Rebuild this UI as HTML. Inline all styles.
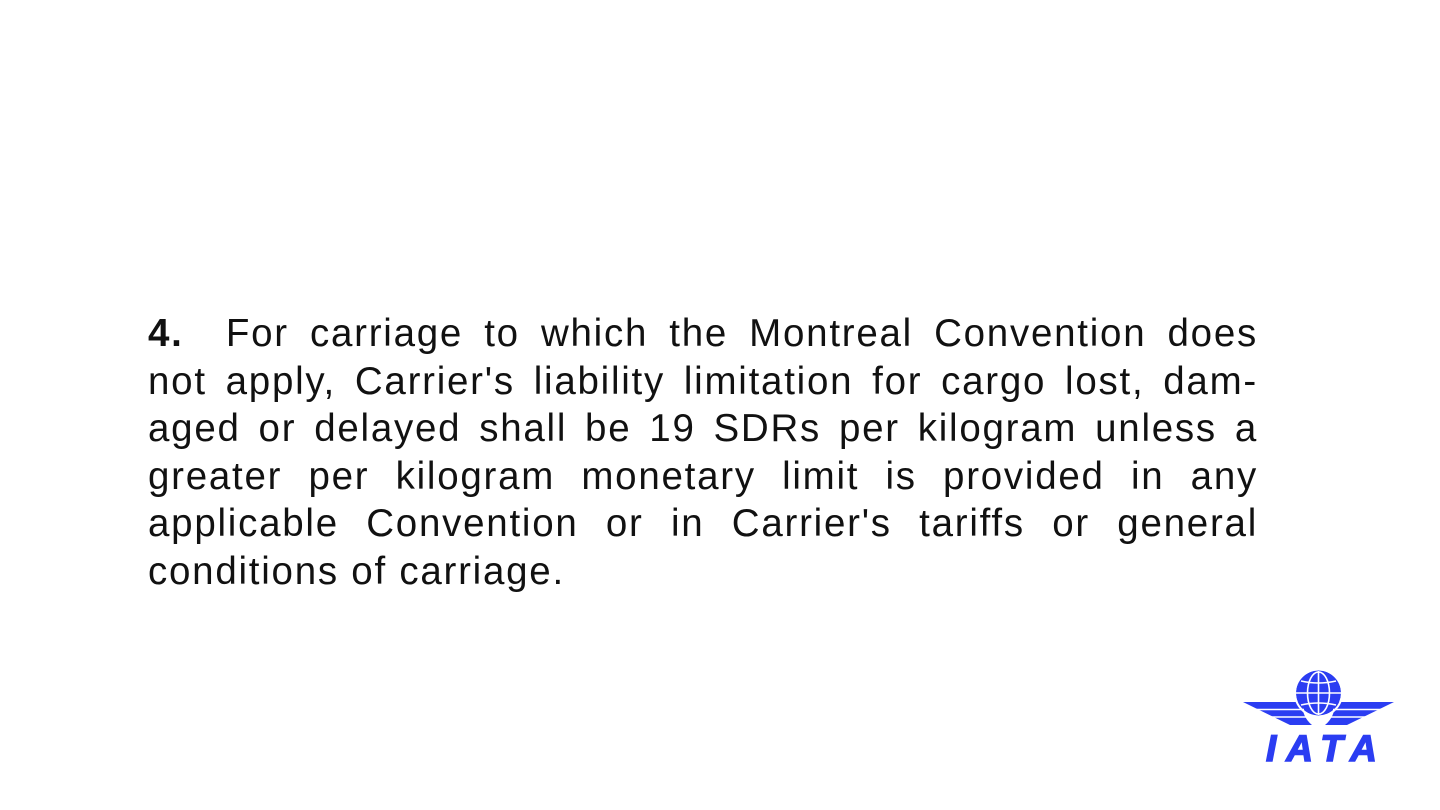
<!DOCTYPE html>
<html><head><meta charset="utf-8"><style>
html,body{margin:0;padding:0;background:#fff;width:1440px;height:810px;overflow:hidden;position:relative}
.t{position:absolute;left:148px;width:1110px;font-family:"Liberation Sans",Arial,sans-serif;font-size:38.5px;color:#111;line-height:47.5px;top:310px;letter-spacing:1.75px}
.l{display:block;text-align:justify;text-align-last:justify;height:47.5px}
.l.last{text-align-last:left;white-space:nowrap}
.iata{position:absolute;left:1266px;top:729px;font-family:"Liberation Sans",Arial,sans-serif;font-weight:bold;font-style:italic;font-size:37px;line-height:40px;color:#2b3df2;letter-spacing:10px;-webkit-text-stroke:1.5px #2b3df2}
</style></head><body>
<div class="t">
<span class="l"><b>4.</b>&nbsp; For carriage to which the Montreal Convention does</span>
<span class="l">not apply, Carrier's liability limitation for cargo lost, dam-</span>
<span class="l">aged or delayed shall be 19 SDRs per kilogram unless a</span>
<span class="l">greater per kilogram monetary limit is provided in any</span>
<span class="l">applicable Convention or in Carrier's tariffs or general</span>
<span class="l last">conditions of carriage.</span>
</div>
<svg style="position:absolute;left:1240px;top:665px" width="160" height="70" viewBox="0 0 160 70">
<g fill="#2b3df2">
<path d="M3 37 L62 37 Q62 52 72 60 L50 60 Z"/>
<path d="M154 37 L95 37 Q95 52 85 60 L107 60 Z"/>
<circle cx="78.5" cy="28" r="22.5"/>
</g>
<g stroke="#fff" stroke-width="1.6" fill="none">
<line x1="10" y1="44.5" x2="64" y2="44.5"/><line x1="20" y1="52" x2="67" y2="52"/>
<line x1="147" y1="44.5" x2="93" y2="44.5"/><line x1="137" y1="52" x2="90" y2="52"/>
<circle cx="78.5" cy="28" r="23.5" stroke-width="2"/>
<ellipse cx="78.5" cy="28" rx="11" ry="21"/>
<line x1="78.5" y1="6" x2="78.5" y2="50"/>
<line x1="56" y1="28" x2="101" y2="28"/>
<path d="M61 16 Q78.5 20 96 16"/><path d="M61 40 Q78.5 36 96 40"/>
</g>
</svg>
<div class="iata">IATA</div>
</body></html>
